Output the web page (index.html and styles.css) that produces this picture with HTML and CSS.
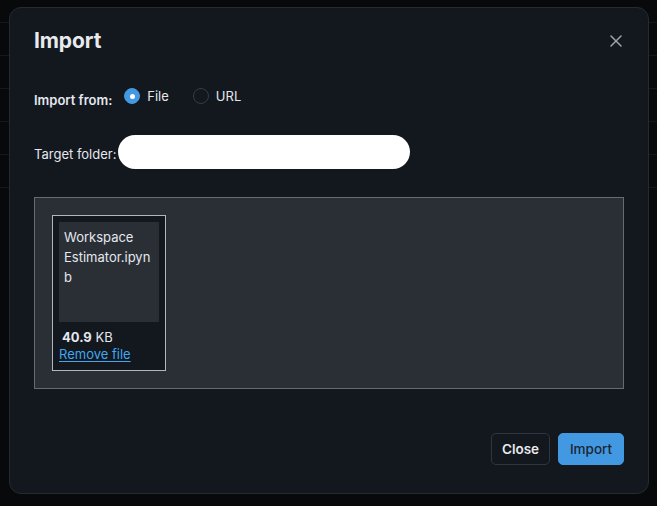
FILE: index.html
```html
<!DOCTYPE html>
<html lang="en">
<head>
<meta charset="utf-8">
<title>Import</title>
<link rel="stylesheet" href="styles.css">
</head>
<body>
<div class="backdrop">
  <div class="bg-head"></div>
  <div class="bg-row"></div>
  <div class="bg-row"></div>
  <div class="bg-row"></div>
  <div class="bg-row"></div>
  <div class="bg-row"></div>
</div>

<div class="modal" role="dialog" aria-label="Import">
  <div class="modal-header">
    <h2 class="modal-title">Import</h2>
    <button class="close-x" aria-label="Close">
      <svg width="12" height="12" viewBox="0 0 12 12"><path d="M1 1 L11 11 M11 1 L1 11" stroke="#9aa4b0" stroke-width="1.5" stroke-linecap="round" fill="none"/></svg>
    </button>
  </div>

  <div class="row-source">
    <span class="label-strong">Import from:</span>
    <div class="radio-group">
      <label class="radio"><span class="radio-dot checked"></span><span class="radio-text">File</span></label>
      <label class="radio"><span class="radio-dot"></span><span class="radio-text">URL</span></label>
    </div>
  </div>

  <div class="row-target">
    <span class="label-plain">Target folder:</span>
    <div class="folder-input"></div>
  </div>

  <div class="dropzone">
    <div class="file-card">
      <div class="file-thumb">Workspace Estimator.ipynb</div>
      <div class="file-size"><b>40.9</b> KB</div>
      <a class="remove-link" href="#">Remove file</a>
    </div>
  </div>

  <div class="modal-footer">
    <button class="btn btn-outline">Close</button>
    <button class="btn btn-primary">Import</button>
  </div>
</div>
</body>
</html>
```

FILE: styles.css
```css
* { box-sizing: border-box; }

html, body {
  margin: 0;
  padding: 0;
  background: #07090b;
  font-family: Inter, "Noto Sans", "Liberation Sans", sans-serif;
  color: #e4e8ee;
}

body {
  width: 657px;
  height: 506px;
  overflow: hidden;
  position: relative;
}

.backdrop .bg-head {
  height: 23px;
  border-bottom: 1px solid #14181c;
}
.backdrop .bg-row {
  height: 33px;
  border-bottom: 1px solid #14181c;
}

.modal {
  position: absolute;
  left: 9px;
  top: 7px;
  width: 640px;
  background: #13171e;
  border: 1px solid #262b32;
  border-radius: 12px;
  padding: 20px 24px 28px 24px;
}

.modal-header {
  display: flex;
  justify-content: space-between;
  align-items: center;
  height: 24px;
}

.modal-title {
  margin: 0;
  font-size: 21px;
  line-height: 24px;
  font-weight: 700;
  color: #e8eaed;
  letter-spacing: -0.1px;
  padding-top: 1px;
}

.close-x {
  background: none;
  border: 0;
  padding: 0;
  margin: 2px 2px 0 0;
  width: 12px;
  height: 12px;
  display: flex;
}

.row-source {
  display: flex;
  align-items: flex-start;
  height: 16px;
  margin-top: 36px;
}

.label-strong {
  font-size: 13px;
  font-weight: 600;
  line-height: 16px;
  padding-top: 4px;
  margin-right: 12px;
  color: #e4e8ee;
}

.radio-group {
  display: flex;
  gap: 24px;
}

.radio {
  display: flex;
  align-items: center;
  gap: 7px;
  height: 16px;
}

.radio-dot {
  width: 16px;
  height: 16px;
  border-radius: 50%;
  border: 1.5px solid #363c45;
  display: flex;
  align-items: center;
  justify-content: center;
}

.radio-dot.checked {
  background: #4399e1;
  border-color: #4399e1;
}
.radio-dot.checked::after {
  content: "";
  width: 5px;
  height: 5px;
  border-radius: 50%;
  background: #ffffff;
}

.radio-text {
  font-size: 13px;
  line-height: 16px;
  color: #e4e8ee;
}

.row-target {
  display: flex;
  align-items: center;
  margin-top: 31px;
  height: 34px;
}

.label-plain {
  font-size: 13px;
  line-height: 20px;
  padding-top: 3px;
  margin-right: 2px;
  color: #e4e8ee;
}

.folder-input {
  width: 292px;
  height: 34px;
  border-radius: 17px;
  background: #ffffff;
}

.dropzone {
  margin-top: 28px;
  background: #2a2f36;
  border: 1px solid #676b71;
  padding: 17px;
  display: flex;
}

.file-card {
  width: 114px;
  border: 1px solid #b4b6b9;
  background: #13171e;
  padding: 6px 6px 7px 6px;
}

.file-thumb {
  width: 100px;
  height: 100px;
  background: #2a2f36;
  padding: 5px 3px 5px 5px;
  font-size: 13px;
  line-height: 20px;
  color: #e4e8ee;
  overflow-wrap: anywhere;
}

.file-size {
  margin-top: 7px;
  padding-left: 3px;
  font-size: 13px;
  line-height: 17px;
  color: #e4e8ee;
}
.file-size b { font-weight: 700; }

.remove-link {
  display: block;
  font-size: 13px;
  line-height: 17px;
  color: #3fa8f0;
  text-decoration: underline;
  text-underline-offset: 2px;
}

.modal-footer {
  display: flex;
  justify-content: flex-end;
  gap: 8px;
  margin-top: 44px;
}

.btn {
  height: 32px;
  border-radius: 5px;
  font-family: inherit;
  font-size: 13.5px;
  padding: 0 10px;
  cursor: pointer;
}

.btn-outline {
  width: 59px;
  background: transparent;
  border: 1px solid #30363e;
  color: #e8eaed;
  font-weight: 600;
}

.btn-primary {
  width: 66px;
  background: #4399e1;
  border: 1px solid #4399e1;
  color: #1c2633;
  font-weight: 500;
}
```
